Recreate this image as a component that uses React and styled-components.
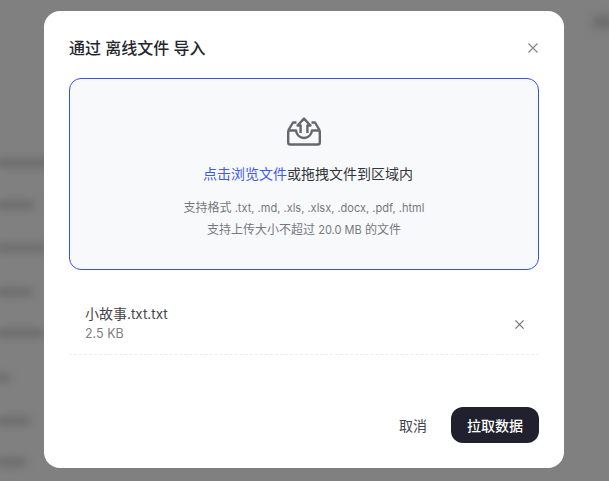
import React from "react"
import styled, { createGlobalStyle } from "styled-components"

const GlobalStyle = createGlobalStyle`
  html, body {
    margin: 0;
    padding: 0;
    height: 100%;
    overflow: hidden;
    background: #808080;
  }
  body {
    font-family: Inter, "Noto Sans CJK SC", sans-serif;
  }
`

const blurredRows = [
  { top: 163, width: 60 },
  { top: 205, width: 38 },
  { top: 248, width: 50 },
  { top: 292, width: 36 },
  { top: 333, width: 48 },
  { top: 378, width: 14 },
  { top: 421, width: 34 },
  { top: 462, width: 30 },
]

export default function App() {
  return (
    <>
      <GlobalStyle />
      <Page>
        {blurredRows.map((row) => (
          <BlurBar key={row.top} $top={row.top} $width={row.width} />
        ))}
        <CornerBlur />
        <Modal>
          <Header>
            <Title>通过 离线文件 导入</Title>
            <CloseIcon />
          </Header>
          <DropZone>
            <UploadIcon />
            <DropText>
              <BrowseLink>点击浏览文件</BrowseLink>或拖拽文件到区域内
            </DropText>
            <Hints>
              <span>
                支持格式<Latin> .txt, .md, .xls, .xlsx, .docx, .pdf, .html</Latin>
              </span>
              <span>
                支持上传大小不超过<Latin> 20.0 MB </Latin>的文件
              </span>
            </Hints>
          </DropZone>
          <FileRow>
            <FileInfo>
              <FileName>
                小故事<Latin $size="13.5px">.txt.txt</Latin>
              </FileName>
              <FileSize>2.5 KB</FileSize>
            </FileInfo>
            <CloseIcon $small />
          </FileRow>
          <Footer>
            <CancelButton>取消</CancelButton>
            <PrimaryButton>拉取数据</PrimaryButton>
          </Footer>
        </Modal>
      </Page>
    </>
  )
}

function CloseIcon({ $small }) {
  const size = $small ? 9 : 10
  return (
    <CloseSvg viewBox="0 0 10 10" width={size} height={size} $small={$small}>
      <path d="M0.5 0.5 L9.5 9.5 M9.5 0.5 L0.5 9.5" />
    </CloseSvg>
  )
}

function UploadIcon() {
  return (
    <IconSvg viewBox="0 0 34 29" width="34" height="29">
      <path d="M1.2 13.5 V25.5 a2 2 0 0 0 2 2 H30.8 a2 2 0 0 0 2 -2 V13.5" />
      <path d="M1.2 13.5 L6 5.5 H9.5 M32.8 13.5 L28 5.5 H24.5" />
      <path d="M1.2 13.5 H9 C9.6 18 13 21 17 21 C21 21 24.4 18 25 13.5 H32.8" />
      <path d="M13.6 16 V8.5 H10.5 L17 1.6 L23.5 8.5 H20.4 V16" />
    </IconSvg>
  )
}

const Page = styled.div`
  position: relative;
  display: flex;
  justify-content: flex-start;
  align-items: flex-start;
  box-sizing: border-box;
  width: 609px;
  height: 481px;
  padding: 11px 0 0 44px;
  overflow: hidden;
  background: #808080;
`

const BlurBar = styled.div`
  position: absolute;
  left: -4px;
  top: ${(p) => p.$top - 4}px;
  width: ${(p) => p.$width}px;
  height: 8px;
  background: #6a6a6a;
  filter: blur(4px);
`

const CornerBlur = styled.div`
  position: absolute;
  right: -6px;
  top: 16px;
  width: 22px;
  height: 12px;
  background: #6a6a6a;
  filter: blur(5px);
`

const Modal = styled.div`
  position: relative;
  box-sizing: border-box;
  width: 520px;
  height: 457px;
  display: flex;
  flex-direction: column;
  padding: 25px;
  background: #fff;
  border-radius: 16px;
`

const Header = styled.div`
  display: flex;
  align-items: center;
  justify-content: space-between;
  height: 24px;
  margin-bottom: 18px;
`

const Title = styled.h2`
  margin: 0;
  font-size: 16px;
  line-height: 24px;
  font-weight: 500;
  color: #25262e;
`

const CloseSvg = styled.svg`
  flex: none;
  margin-right: ${(p) => (p.$small ? "0" : "1px")};
  path {
    fill: none;
    stroke: ${(p) => (p.$small ? "#66676c" : "#85868a")};
    stroke-width: 1.2;
  }
`

const DropZone = styled.div`
  box-sizing: border-box;
  height: 192px;
  display: flex;
  flex-direction: column;
  align-items: center;
  padding-top: 38px;
  background: #f8f9fb;
  border: 1px solid #3a4ff0;
  border-radius: 12px;
`

const IconSvg = styled.svg`
  flex: none;
  path {
    fill: none;
    stroke: #66676b;
    stroke-width: 2.4;
    stroke-linejoin: round;
  }
`

const DropText = styled.div`
  margin: 18px 0 0 8px;
  font-size: 14px;
  line-height: 20px;
  color: #33343b;
`

const BrowseLink = styled.span`
  color: #3f5af2;
`

const Hints = styled.div`
  display: flex;
  flex-direction: column;
  align-items: center;
  margin-top: 13px;
  font-size: 12px;
  line-height: 21px;
  color: #77787d;
`

const Latin = styled.span`
  font-size: ${(p) => p.$size || "0.92em"};
`

const FileRow = styled.div`
  display: flex;
  align-items: center;
  justify-content: space-between;
  box-sizing: border-box;
  height: 69px;
  margin-top: 16px;
  padding: 8px 15px 0 16px;
  border-bottom: 1px dashed #eceded;
`

const FileInfo = styled.div`
  display: flex;
  flex-direction: column;
`

const FileName = styled.div`
  font-size: 14px;
  line-height: 20px;
  color: #44454b;
`

const FileSize = styled.div`
  font-size: 12.5px;
  line-height: 20px;
  color: #7f8085;
`

const Footer = styled.div`
  display: flex;
  align-items: center;
  justify-content: flex-end;
  gap: 24px;
  margin-top: auto;
`

const CancelButton = styled.button`
  padding: 0;
  border: 0;
  background: none;
  font: inherit;
  font-size: 14px;
  color: #44454b;
`

const PrimaryButton = styled.button`
  width: 88px;
  height: 36px;
  padding: 0;
  border: 0;
  border-radius: 12px;
  background: #20202e;
  font: inherit;
  font-size: 14px;
  font-weight: 500;
  color: #fff;
`
